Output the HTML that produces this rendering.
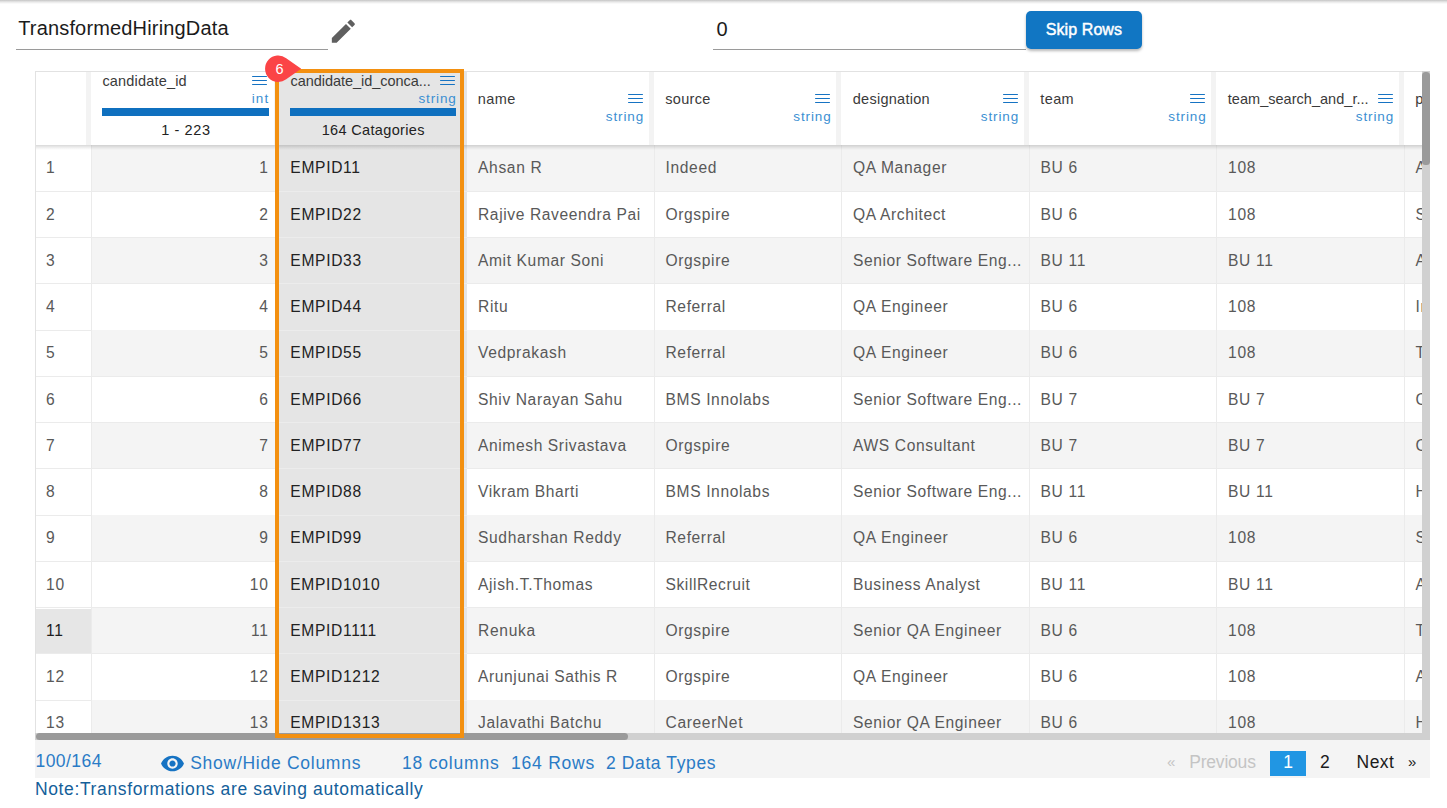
<!DOCTYPE html>
<html><head><meta charset="utf-8"><style>
html,body{margin:0;padding:0;}
body{width:1447px;height:808px;overflow:hidden;position:relative;background:#fff;font-family:"Liberation Sans",sans-serif;}
.t{position:absolute;white-space:nowrap;}
.r{position:absolute;box-sizing:content-box;}
</style></head><body>
<div class="r" style="left:0px;top:0px;width:1447px;height:4px;background:linear-gradient(#c4c4c4,#e6e6e6 45%,#ffffff);"></div>
<div class="t" style="left:18.20px;top:18.27px;font-size:20px;line-height:20px;color:#1b1b1b;letter-spacing:0.164px;">TransformedHiringData</div>
<div class="r" style="left:16px;top:49px;width:312px;height:1px;background:#9a9a9a;"></div>
<svg class="r" style="left:327.9px;top:16.1px;width:30.7px;height:30.7px" viewBox="0 0 24 24"><path fill="#5f5f5f" d="M3 17.25V21h3.75L17.81 9.94l-3.75-3.75L3 17.25zM20.71 7.04c.39-.39.39-1.02 0-1.41l-2.34-2.34c-.39-.39-1.02-.39-1.41 0l-1.83 1.83 3.75 3.75 1.83-1.83z"/></svg>
<div class="t" style="left:716.50px;top:18.97px;font-size:20px;line-height:20px;color:#1b1b1b;">0</div>
<div class="r" style="left:712.7px;top:49px;width:313.3px;height:1px;background:#9a9a9a;"></div>
<div class="r" style="left:1026px;top:11px;width:116px;height:38px;background:#1176c3;border-radius:5px;box-shadow:0 2px 3px rgba(0,0,0,.28);"></div>
<div class="t" style="left:1045.80px;top:21.66px;font-size:16px;line-height:16px;color:#ffffff;letter-spacing:0.078px;-webkit-text-stroke:0.45px #fff;">Skip Rows</div>
<div class="r" style="left:35px;top:71px;width:1395px;height:669px;background:#ffffff;"></div>
<div class="r" style="left:91.5px;top:145.0px;width:1338.5px;height:46.25px;background:#f4f4f4;"></div>
<div class="r" style="left:35px;top:190.75px;width:1395px;height:1px;background:#ebebeb;"></div>
<div class="r" style="left:35px;top:237.0px;width:1395px;height:1px;background:#ebebeb;"></div>
<div class="r" style="left:91.5px;top:237.5px;width:1338.5px;height:46.25px;background:#f4f4f4;"></div>
<div class="r" style="left:35px;top:283.25px;width:1395px;height:1px;background:#ebebeb;"></div>
<div class="r" style="left:35px;top:329.5px;width:1395px;height:1px;background:#ebebeb;"></div>
<div class="r" style="left:91.5px;top:330.0px;width:1338.5px;height:46.25px;background:#f4f4f4;"></div>
<div class="r" style="left:35px;top:375.75px;width:1395px;height:1px;background:#ebebeb;"></div>
<div class="r" style="left:35px;top:422.0px;width:1395px;height:1px;background:#ebebeb;"></div>
<div class="r" style="left:91.5px;top:422.5px;width:1338.5px;height:46.25px;background:#f4f4f4;"></div>
<div class="r" style="left:35px;top:468.25px;width:1395px;height:1px;background:#ebebeb;"></div>
<div class="r" style="left:35px;top:514.5px;width:1395px;height:1px;background:#ebebeb;"></div>
<div class="r" style="left:91.5px;top:515.0px;width:1338.5px;height:46.25px;background:#f4f4f4;"></div>
<div class="r" style="left:35px;top:560.75px;width:1395px;height:1px;background:#ebebeb;"></div>
<div class="r" style="left:35px;top:607.0px;width:1395px;height:1px;background:#ebebeb;"></div>
<div class="r" style="left:91.5px;top:607.5px;width:1338.5px;height:46.25px;background:#f4f4f4;"></div>
<div class="r" style="left:36px;top:608.5px;width:55px;height:45.25px;background:#e6e6e6;"></div>
<div class="r" style="left:35px;top:653.25px;width:1395px;height:1px;background:#ebebeb;"></div>
<div class="r" style="left:35px;top:699.5px;width:1395px;height:1px;background:#ebebeb;"></div>
<div class="r" style="left:91.5px;top:700.0px;width:1338.5px;height:46.25px;background:#f4f4f4;"></div>
<div class="r" style="left:35px;top:745.75px;width:1395px;height:1px;background:#ebebeb;"></div>
<div class="r" style="left:91px;top:145px;width:1px;height:595px;background:#ebebeb;"></div>
<div class="r" style="left:278.5px;top:145px;width:1px;height:595px;background:#ebebeb;"></div>
<div class="r" style="left:466.0px;top:145px;width:1px;height:595px;background:#ebebeb;"></div>
<div class="r" style="left:653.5px;top:145px;width:1px;height:595px;background:#ebebeb;"></div>
<div class="r" style="left:841.0px;top:145px;width:1px;height:595px;background:#ebebeb;"></div>
<div class="r" style="left:1028.5px;top:145px;width:1px;height:595px;background:#ebebeb;"></div>
<div class="r" style="left:1216.0px;top:145px;width:1px;height:595px;background:#ebebeb;"></div>
<div class="r" style="left:1403.5px;top:145px;width:1px;height:595px;background:#ebebeb;"></div>
<div class="r" style="left:279px;top:145px;width:187.5px;height:595px;background:#e5e5e5;"></div>
<div class="r" style="left:279px;top:190.75px;width:187.5px;height:1px;background:#ececec;"></div>
<div class="r" style="left:279px;top:237.0px;width:187.5px;height:1px;background:#ececec;"></div>
<div class="r" style="left:279px;top:283.25px;width:187.5px;height:1px;background:#ececec;"></div>
<div class="r" style="left:279px;top:329.5px;width:187.5px;height:1px;background:#ececec;"></div>
<div class="r" style="left:279px;top:375.75px;width:187.5px;height:1px;background:#ececec;"></div>
<div class="r" style="left:279px;top:422.0px;width:187.5px;height:1px;background:#ececec;"></div>
<div class="r" style="left:279px;top:468.25px;width:187.5px;height:1px;background:#ececec;"></div>
<div class="r" style="left:279px;top:514.5px;width:187.5px;height:1px;background:#ececec;"></div>
<div class="r" style="left:279px;top:560.75px;width:187.5px;height:1px;background:#ececec;"></div>
<div class="r" style="left:279px;top:607.0px;width:187.5px;height:1px;background:#ececec;"></div>
<div class="r" style="left:279px;top:653.25px;width:187.5px;height:1px;background:#ececec;"></div>
<div class="r" style="left:279px;top:699.5px;width:187.5px;height:1px;background:#ececec;"></div>
<div class="r" style="left:279px;top:745.75px;width:187.5px;height:1px;background:#ececec;"></div>
<div class="t" style="left:45.90px;top:160.29px;font-size:15.6px;line-height:15.6px;color:#595959;letter-spacing:0.222px;">1</div>
<div class="t" style="left:259.32px;top:160.29px;font-size:15.6px;line-height:15.6px;color:#595959;letter-spacing:0.222px;">1</div>
<div class="t" style="left:290.30px;top:160.29px;font-size:15.6px;line-height:15.6px;color:#222222;letter-spacing:0.680px;">EMPID11</div>
<div class="t" style="left:478.00px;top:160.29px;font-size:15.6px;line-height:15.6px;color:#595959;letter-spacing:0.656px;">Ahsan R</div>
<div class="t" style="left:665.50px;top:160.29px;font-size:15.6px;line-height:15.6px;color:#595959;letter-spacing:0.645px;">Indeed</div>
<div class="t" style="left:853.00px;top:160.29px;font-size:15.6px;line-height:15.6px;color:#595959;letter-spacing:0.650px;">QA Manager</div>
<div class="t" style="left:1040.50px;top:160.29px;font-size:15.6px;line-height:15.6px;color:#595959;letter-spacing:0.696px;">BU 6</div>
<div class="t" style="left:1228.00px;top:160.29px;font-size:15.6px;line-height:15.6px;color:#595959;letter-spacing:0.734px;">108</div>
<div class="t" style="left:1415.50px;top:160.29px;font-size:15.6px;line-height:15.6px;color:#595959;letter-spacing:0.267px;">A</div>
<div class="t" style="left:45.90px;top:206.54px;font-size:15.6px;line-height:15.6px;color:#595959;letter-spacing:0.222px;">2</div>
<div class="t" style="left:259.32px;top:206.54px;font-size:15.6px;line-height:15.6px;color:#595959;letter-spacing:0.222px;">2</div>
<div class="t" style="left:290.30px;top:206.54px;font-size:15.6px;line-height:15.6px;color:#222222;letter-spacing:0.685px;">EMPID22</div>
<div class="t" style="left:478.00px;top:206.54px;font-size:15.6px;line-height:15.6px;color:#595959;letter-spacing:0.604px;">Rajive Raveendra Pai</div>
<div class="t" style="left:665.50px;top:206.54px;font-size:15.6px;line-height:15.6px;color:#595959;letter-spacing:0.619px;">Orgspire</div>
<div class="t" style="left:853.00px;top:206.54px;font-size:15.6px;line-height:15.6px;color:#595959;letter-spacing:0.600px;">QA Architect</div>
<div class="t" style="left:1040.50px;top:206.54px;font-size:15.6px;line-height:15.6px;color:#595959;letter-spacing:0.696px;">BU 6</div>
<div class="t" style="left:1228.00px;top:206.54px;font-size:15.6px;line-height:15.6px;color:#595959;letter-spacing:0.734px;">108</div>
<div class="t" style="left:1415.50px;top:206.54px;font-size:15.6px;line-height:15.6px;color:#595959;letter-spacing:0.267px;">S</div>
<div class="t" style="left:45.90px;top:252.79px;font-size:15.6px;line-height:15.6px;color:#595959;letter-spacing:0.222px;">3</div>
<div class="t" style="left:259.32px;top:252.79px;font-size:15.6px;line-height:15.6px;color:#595959;letter-spacing:0.222px;">3</div>
<div class="t" style="left:290.30px;top:252.79px;font-size:15.6px;line-height:15.6px;color:#222222;letter-spacing:0.685px;">EMPID33</div>
<div class="t" style="left:478.00px;top:252.79px;font-size:15.6px;line-height:15.6px;color:#595959;letter-spacing:0.614px;">Amit Kumar Soni</div>
<div class="t" style="left:665.50px;top:252.79px;font-size:15.6px;line-height:15.6px;color:#595959;letter-spacing:0.619px;">Orgspire</div>
<div class="t" style="left:853.00px;top:252.79px;font-size:15.6px;line-height:15.6px;color:#595959;letter-spacing:0.591px;">Senior Software Eng...</div>
<div class="t" style="left:1040.50px;top:252.79px;font-size:15.6px;line-height:15.6px;color:#595959;letter-spacing:0.671px;">BU 11</div>
<div class="t" style="left:1228.00px;top:252.79px;font-size:15.6px;line-height:15.6px;color:#595959;letter-spacing:0.671px;">BU 11</div>
<div class="t" style="left:1415.50px;top:252.79px;font-size:15.6px;line-height:15.6px;color:#595959;letter-spacing:0.267px;">A</div>
<div class="t" style="left:45.90px;top:299.04px;font-size:15.6px;line-height:15.6px;color:#595959;letter-spacing:0.222px;">4</div>
<div class="t" style="left:259.32px;top:299.04px;font-size:15.6px;line-height:15.6px;color:#595959;letter-spacing:0.222px;">4</div>
<div class="t" style="left:290.30px;top:299.04px;font-size:15.6px;line-height:15.6px;color:#222222;letter-spacing:0.685px;">EMPID44</div>
<div class="t" style="left:478.00px;top:299.04px;font-size:15.6px;line-height:15.6px;color:#595959;letter-spacing:0.637px;">Ritu</div>
<div class="t" style="left:665.50px;top:299.04px;font-size:15.6px;line-height:15.6px;color:#595959;letter-spacing:0.603px;">Referral</div>
<div class="t" style="left:853.00px;top:299.04px;font-size:15.6px;line-height:15.6px;color:#595959;letter-spacing:0.627px;">QA Engineer</div>
<div class="t" style="left:1040.50px;top:299.04px;font-size:15.6px;line-height:15.6px;color:#595959;letter-spacing:0.696px;">BU 6</div>
<div class="t" style="left:1228.00px;top:299.04px;font-size:15.6px;line-height:15.6px;color:#595959;letter-spacing:0.734px;">108</div>
<div class="t" style="left:1415.50px;top:299.04px;font-size:15.6px;line-height:15.6px;color:#595959;letter-spacing:0.734px;">In</div>
<div class="t" style="left:45.90px;top:345.29px;font-size:15.6px;line-height:15.6px;color:#595959;letter-spacing:0.222px;">5</div>
<div class="t" style="left:259.32px;top:345.29px;font-size:15.6px;line-height:15.6px;color:#595959;letter-spacing:0.222px;">5</div>
<div class="t" style="left:290.30px;top:345.29px;font-size:15.6px;line-height:15.6px;color:#222222;letter-spacing:0.685px;">EMPID55</div>
<div class="t" style="left:478.00px;top:345.29px;font-size:15.6px;line-height:15.6px;color:#595959;letter-spacing:0.635px;">Vedprakash</div>
<div class="t" style="left:665.50px;top:345.29px;font-size:15.6px;line-height:15.6px;color:#595959;letter-spacing:0.603px;">Referral</div>
<div class="t" style="left:853.00px;top:345.29px;font-size:15.6px;line-height:15.6px;color:#595959;letter-spacing:0.627px;">QA Engineer</div>
<div class="t" style="left:1040.50px;top:345.29px;font-size:15.6px;line-height:15.6px;color:#595959;letter-spacing:0.696px;">BU 6</div>
<div class="t" style="left:1228.00px;top:345.29px;font-size:15.6px;line-height:15.6px;color:#595959;letter-spacing:0.734px;">108</div>
<div class="t" style="left:1415.50px;top:345.29px;font-size:15.6px;line-height:15.6px;color:#595959;letter-spacing:0.244px;">T</div>
<div class="t" style="left:45.90px;top:391.54px;font-size:15.6px;line-height:15.6px;color:#595959;letter-spacing:0.222px;">6</div>
<div class="t" style="left:259.32px;top:391.54px;font-size:15.6px;line-height:15.6px;color:#595959;letter-spacing:0.222px;">6</div>
<div class="t" style="left:290.30px;top:391.54px;font-size:15.6px;line-height:15.6px;color:#222222;letter-spacing:0.685px;">EMPID66</div>
<div class="t" style="left:478.00px;top:391.54px;font-size:15.6px;line-height:15.6px;color:#595959;letter-spacing:0.615px;">Shiv Narayan Sahu</div>
<div class="t" style="left:665.50px;top:391.54px;font-size:15.6px;line-height:15.6px;color:#595959;letter-spacing:0.626px;">BMS Innolabs</div>
<div class="t" style="left:853.00px;top:391.54px;font-size:15.6px;line-height:15.6px;color:#595959;letter-spacing:0.591px;">Senior Software Eng...</div>
<div class="t" style="left:1040.50px;top:391.54px;font-size:15.6px;line-height:15.6px;color:#595959;letter-spacing:0.696px;">BU 7</div>
<div class="t" style="left:1228.00px;top:391.54px;font-size:15.6px;line-height:15.6px;color:#595959;letter-spacing:0.696px;">BU 7</div>
<div class="t" style="left:1415.50px;top:391.54px;font-size:15.6px;line-height:15.6px;color:#595959;letter-spacing:0.289px;">C</div>
<div class="t" style="left:45.90px;top:437.79px;font-size:15.6px;line-height:15.6px;color:#595959;letter-spacing:0.222px;">7</div>
<div class="t" style="left:259.32px;top:437.79px;font-size:15.6px;line-height:15.6px;color:#595959;letter-spacing:0.222px;">7</div>
<div class="t" style="left:290.30px;top:437.79px;font-size:15.6px;line-height:15.6px;color:#222222;letter-spacing:0.685px;">EMPID77</div>
<div class="t" style="left:478.00px;top:437.79px;font-size:15.6px;line-height:15.6px;color:#595959;letter-spacing:0.608px;">Animesh Srivastava</div>
<div class="t" style="left:665.50px;top:437.79px;font-size:15.6px;line-height:15.6px;color:#595959;letter-spacing:0.619px;">Orgspire</div>
<div class="t" style="left:853.00px;top:437.79px;font-size:15.6px;line-height:15.6px;color:#595959;letter-spacing:0.625px;">AWS Consultant</div>
<div class="t" style="left:1040.50px;top:437.79px;font-size:15.6px;line-height:15.6px;color:#595959;letter-spacing:0.696px;">BU 7</div>
<div class="t" style="left:1228.00px;top:437.79px;font-size:15.6px;line-height:15.6px;color:#595959;letter-spacing:0.696px;">BU 7</div>
<div class="t" style="left:1415.50px;top:437.79px;font-size:15.6px;line-height:15.6px;color:#595959;letter-spacing:0.289px;">C</div>
<div class="t" style="left:45.90px;top:484.04px;font-size:15.6px;line-height:15.6px;color:#595959;letter-spacing:0.222px;">8</div>
<div class="t" style="left:259.32px;top:484.04px;font-size:15.6px;line-height:15.6px;color:#595959;letter-spacing:0.222px;">8</div>
<div class="t" style="left:290.30px;top:484.04px;font-size:15.6px;line-height:15.6px;color:#222222;letter-spacing:0.685px;">EMPID88</div>
<div class="t" style="left:478.00px;top:484.04px;font-size:15.6px;line-height:15.6px;color:#595959;letter-spacing:0.599px;">Vikram Bharti</div>
<div class="t" style="left:665.50px;top:484.04px;font-size:15.6px;line-height:15.6px;color:#595959;letter-spacing:0.626px;">BMS Innolabs</div>
<div class="t" style="left:853.00px;top:484.04px;font-size:15.6px;line-height:15.6px;color:#595959;letter-spacing:0.591px;">Senior Software Eng...</div>
<div class="t" style="left:1040.50px;top:484.04px;font-size:15.6px;line-height:15.6px;color:#595959;letter-spacing:0.671px;">BU 11</div>
<div class="t" style="left:1228.00px;top:484.04px;font-size:15.6px;line-height:15.6px;color:#595959;letter-spacing:0.671px;">BU 11</div>
<div class="t" style="left:1415.50px;top:484.04px;font-size:15.6px;line-height:15.6px;color:#595959;letter-spacing:0.289px;">H</div>
<div class="t" style="left:45.90px;top:530.29px;font-size:15.6px;line-height:15.6px;color:#595959;letter-spacing:0.222px;">9</div>
<div class="t" style="left:259.32px;top:530.29px;font-size:15.6px;line-height:15.6px;color:#595959;letter-spacing:0.222px;">9</div>
<div class="t" style="left:290.30px;top:530.29px;font-size:15.6px;line-height:15.6px;color:#222222;letter-spacing:0.685px;">EMPID99</div>
<div class="t" style="left:478.00px;top:530.29px;font-size:15.6px;line-height:15.6px;color:#595959;letter-spacing:0.628px;">Sudharshan Reddy</div>
<div class="t" style="left:665.50px;top:530.29px;font-size:15.6px;line-height:15.6px;color:#595959;letter-spacing:0.603px;">Referral</div>
<div class="t" style="left:853.00px;top:530.29px;font-size:15.6px;line-height:15.6px;color:#595959;letter-spacing:0.627px;">QA Engineer</div>
<div class="t" style="left:1040.50px;top:530.29px;font-size:15.6px;line-height:15.6px;color:#595959;letter-spacing:0.696px;">BU 6</div>
<div class="t" style="left:1228.00px;top:530.29px;font-size:15.6px;line-height:15.6px;color:#595959;letter-spacing:0.734px;">108</div>
<div class="t" style="left:1415.50px;top:530.29px;font-size:15.6px;line-height:15.6px;color:#595959;letter-spacing:0.267px;">S</div>
<div class="t" style="left:45.90px;top:576.54px;font-size:15.6px;line-height:15.6px;color:#595959;letter-spacing:0.845px;">10</div>
<div class="t" style="left:249.80px;top:576.54px;font-size:15.6px;line-height:15.6px;color:#595959;letter-spacing:0.845px;">10</div>
<div class="t" style="left:290.30px;top:576.54px;font-size:15.6px;line-height:15.6px;color:#222222;letter-spacing:0.670px;">EMPID1010</div>
<div class="t" style="left:478.00px;top:576.54px;font-size:15.6px;line-height:15.6px;color:#595959;letter-spacing:0.610px;">Ajish.T.Thomas</div>
<div class="t" style="left:665.50px;top:576.54px;font-size:15.6px;line-height:15.6px;color:#595959;letter-spacing:0.582px;">SkillRecruit</div>
<div class="t" style="left:853.00px;top:576.54px;font-size:15.6px;line-height:15.6px;color:#595959;letter-spacing:0.602px;">Business Analyst</div>
<div class="t" style="left:1040.50px;top:576.54px;font-size:15.6px;line-height:15.6px;color:#595959;letter-spacing:0.671px;">BU 11</div>
<div class="t" style="left:1228.00px;top:576.54px;font-size:15.6px;line-height:15.6px;color:#595959;letter-spacing:0.671px;">BU 11</div>
<div class="t" style="left:1415.50px;top:576.54px;font-size:15.6px;line-height:15.6px;color:#595959;letter-spacing:0.267px;">A</div>
<div class="t" style="left:45.90px;top:622.79px;font-size:15.6px;line-height:15.6px;color:#1e1e1e;letter-spacing:0.815px;">11</div>
<div class="t" style="left:250.99px;top:622.79px;font-size:15.6px;line-height:15.6px;color:#595959;letter-spacing:0.815px;">11</div>
<div class="t" style="left:290.30px;top:622.79px;font-size:15.6px;line-height:15.6px;color:#222222;letter-spacing:0.658px;">EMPID1111</div>
<div class="t" style="left:478.00px;top:622.79px;font-size:15.6px;line-height:15.6px;color:#595959;letter-spacing:0.676px;">Renuka</div>
<div class="t" style="left:665.50px;top:622.79px;font-size:15.6px;line-height:15.6px;color:#595959;letter-spacing:0.619px;">Orgspire</div>
<div class="t" style="left:853.00px;top:622.79px;font-size:15.6px;line-height:15.6px;color:#595959;letter-spacing:0.608px;">Senior QA Engineer</div>
<div class="t" style="left:1040.50px;top:622.79px;font-size:15.6px;line-height:15.6px;color:#595959;letter-spacing:0.696px;">BU 6</div>
<div class="t" style="left:1228.00px;top:622.79px;font-size:15.6px;line-height:15.6px;color:#595959;letter-spacing:0.734px;">108</div>
<div class="t" style="left:1415.50px;top:622.79px;font-size:15.6px;line-height:15.6px;color:#595959;letter-spacing:0.244px;">T</div>
<div class="t" style="left:45.90px;top:669.04px;font-size:15.6px;line-height:15.6px;color:#595959;letter-spacing:0.845px;">12</div>
<div class="t" style="left:249.80px;top:669.04px;font-size:15.6px;line-height:15.6px;color:#595959;letter-spacing:0.845px;">12</div>
<div class="t" style="left:290.30px;top:669.04px;font-size:15.6px;line-height:15.6px;color:#222222;letter-spacing:0.670px;">EMPID1212</div>
<div class="t" style="left:478.00px;top:669.04px;font-size:15.6px;line-height:15.6px;color:#595959;letter-spacing:0.595px;">Arunjunai Sathis R</div>
<div class="t" style="left:665.50px;top:669.04px;font-size:15.6px;line-height:15.6px;color:#595959;letter-spacing:0.619px;">Orgspire</div>
<div class="t" style="left:853.00px;top:669.04px;font-size:15.6px;line-height:15.6px;color:#595959;letter-spacing:0.627px;">QA Engineer</div>
<div class="t" style="left:1040.50px;top:669.04px;font-size:15.6px;line-height:15.6px;color:#595959;letter-spacing:0.696px;">BU 6</div>
<div class="t" style="left:1228.00px;top:669.04px;font-size:15.6px;line-height:15.6px;color:#595959;letter-spacing:0.734px;">108</div>
<div class="t" style="left:1415.50px;top:669.04px;font-size:15.6px;line-height:15.6px;color:#595959;letter-spacing:0.267px;">A</div>
<div class="t" style="left:45.90px;top:715.29px;font-size:15.6px;line-height:15.6px;color:#595959;letter-spacing:0.845px;">13</div>
<div class="t" style="left:249.80px;top:715.29px;font-size:15.6px;line-height:15.6px;color:#595959;letter-spacing:0.845px;">13</div>
<div class="t" style="left:290.30px;top:715.29px;font-size:15.6px;line-height:15.6px;color:#222222;letter-spacing:0.670px;">EMPID1313</div>
<div class="t" style="left:478.00px;top:715.29px;font-size:15.6px;line-height:15.6px;color:#595959;letter-spacing:0.596px;">Jalavathi Batchu</div>
<div class="t" style="left:665.50px;top:715.29px;font-size:15.6px;line-height:15.6px;color:#595959;letter-spacing:0.631px;">CareerNet</div>
<div class="t" style="left:853.00px;top:715.29px;font-size:15.6px;line-height:15.6px;color:#595959;letter-spacing:0.608px;">Senior QA Engineer</div>
<div class="t" style="left:1040.50px;top:715.29px;font-size:15.6px;line-height:15.6px;color:#595959;letter-spacing:0.696px;">BU 6</div>
<div class="t" style="left:1228.00px;top:715.29px;font-size:15.6px;line-height:15.6px;color:#595959;letter-spacing:0.734px;">108</div>
<div class="t" style="left:1415.50px;top:715.29px;font-size:15.6px;line-height:15.6px;color:#595959;letter-spacing:0.289px;">H</div>
<div class="r" style="left:35px;top:71px;width:1395px;height:74px;background:#ffffff;"></div>
<div class="r" style="left:35px;top:145px;width:1395px;height:5px;background:linear-gradient(rgba(0,0,0,.15),rgba(0,0,0,.05) 60%,rgba(0,0,0,0));"></div>
<div class="r" style="left:86.3px;top:72px;width:5.2px;height:73px;background:#f3f3f3;"></div>
<div class="r" style="left:273.7px;top:72px;width:5.3px;height:73px;background:#f3f3f3;"></div>
<div class="r" style="left:461.2px;top:72px;width:5.3px;height:73px;background:#f3f3f3;"></div>
<div class="r" style="left:648.7px;top:72px;width:5.3px;height:73px;background:#f3f3f3;"></div>
<div class="r" style="left:836.2px;top:72px;width:5.3px;height:73px;background:#f3f3f3;"></div>
<div class="r" style="left:1023.7px;top:72px;width:5.3px;height:73px;background:#f3f3f3;"></div>
<div class="r" style="left:1211.2px;top:72px;width:5.3px;height:73px;background:#f3f3f3;"></div>
<div class="r" style="left:1398.7px;top:72px;width:5.3px;height:73px;background:#f3f3f3;"></div>
<div class="r" style="left:279px;top:71px;width:187.5px;height:74px;background:#e5e5e5;"></div>
<div class="t" style="left:102.40px;top:73.73px;font-size:14.5px;line-height:14.5px;color:#3a3a3a;letter-spacing:0.187px;">candidate_id</div>
<div class="r" style="left:252px;top:75.8px;width:15px;height:1.3px;background:#1673c3;border-radius:0.7px;"></div>
<div class="r" style="left:252px;top:79.85px;width:15px;height:1.3px;background:#1673c3;border-radius:0.7px;"></div>
<div class="r" style="left:252px;top:83.9px;width:15px;height:1.3px;background:#1673c3;border-radius:0.7px;"></div>
<div class="t" style="left:251.70px;top:91.87px;font-size:13.5px;line-height:13.5px;color:#3b8fd2;letter-spacing:1.171px;">int</div>
<div class="r" style="left:102px;top:108px;width:167px;height:8px;background:#0f70bf;"></div>
<div class="t" style="left:161.20px;top:123.33px;font-size:14.5px;line-height:14.5px;color:#222222;letter-spacing:0.609px;">1 - 223</div>
<div class="t" style="left:290.60px;top:73.73px;font-size:14.5px;line-height:14.5px;color:#3a3a3a;letter-spacing:-0.049px;">candidate_id_conca...</div>
<div class="r" style="left:440px;top:75.8px;width:15px;height:1.3px;background:#1673c3;border-radius:0.7px;"></div>
<div class="r" style="left:440px;top:79.85px;width:15px;height:1.3px;background:#1673c3;border-radius:0.7px;"></div>
<div class="r" style="left:440px;top:83.9px;width:15px;height:1.3px;background:#1673c3;border-radius:0.7px;"></div>
<div class="t" style="left:418.40px;top:91.87px;font-size:13.5px;line-height:13.5px;color:#3b8fd2;letter-spacing:0.877px;">string</div>
<div class="r" style="left:290px;top:108px;width:166px;height:8px;background:#0f70bf;"></div>
<div class="t" style="left:321.70px;top:123.33px;font-size:14.5px;line-height:14.5px;color:#222222;letter-spacing:0.343px;">164 Catagories</div>
<div class="t" style="left:477.80px;top:91.83px;font-size:14.5px;line-height:14.5px;color:#3a3a3a;letter-spacing:0.423px;">name</div>
<div class="r" style="left:627.5px;top:93.8px;width:15px;height:1.3px;background:#1673c3;border-radius:0.7px;"></div>
<div class="r" style="left:627.5px;top:97.85px;width:15px;height:1.3px;background:#1673c3;border-radius:0.7px;"></div>
<div class="r" style="left:627.5px;top:101.9px;width:15px;height:1.3px;background:#1673c3;border-radius:0.7px;"></div>
<div class="t" style="left:605.80px;top:109.77px;font-size:13.5px;line-height:13.5px;color:#3b8fd2;letter-spacing:0.877px;">string</div>
<div class="t" style="left:665.30px;top:91.83px;font-size:14.5px;line-height:14.5px;color:#3a3a3a;letter-spacing:0.305px;">source</div>
<div class="r" style="left:815.0px;top:93.8px;width:15px;height:1.3px;background:#1673c3;border-radius:0.7px;"></div>
<div class="r" style="left:815.0px;top:97.85px;width:15px;height:1.3px;background:#1673c3;border-radius:0.7px;"></div>
<div class="r" style="left:815.0px;top:101.9px;width:15px;height:1.3px;background:#1673c3;border-radius:0.7px;"></div>
<div class="t" style="left:793.30px;top:109.77px;font-size:13.5px;line-height:13.5px;color:#3b8fd2;letter-spacing:0.877px;">string</div>
<div class="t" style="left:852.80px;top:91.83px;font-size:14.5px;line-height:14.5px;color:#3a3a3a;letter-spacing:0.260px;">designation</div>
<div class="r" style="left:1002.5px;top:93.8px;width:15px;height:1.3px;background:#1673c3;border-radius:0.7px;"></div>
<div class="r" style="left:1002.5px;top:97.85px;width:15px;height:1.3px;background:#1673c3;border-radius:0.7px;"></div>
<div class="r" style="left:1002.5px;top:101.9px;width:15px;height:1.3px;background:#1673c3;border-radius:0.7px;"></div>
<div class="t" style="left:980.80px;top:109.77px;font-size:13.5px;line-height:13.5px;color:#3b8fd2;letter-spacing:0.877px;">string</div>
<div class="t" style="left:1040.30px;top:91.83px;font-size:14.5px;line-height:14.5px;color:#3a3a3a;letter-spacing:0.376px;">team</div>
<div class="r" style="left:1190.0px;top:93.8px;width:15px;height:1.3px;background:#1673c3;border-radius:0.7px;"></div>
<div class="r" style="left:1190.0px;top:97.85px;width:15px;height:1.3px;background:#1673c3;border-radius:0.7px;"></div>
<div class="r" style="left:1190.0px;top:101.9px;width:15px;height:1.3px;background:#1673c3;border-radius:0.7px;"></div>
<div class="t" style="left:1168.30px;top:109.77px;font-size:13.5px;line-height:13.5px;color:#3b8fd2;letter-spacing:0.877px;">string</div>
<div class="t" style="left:1227.80px;top:91.83px;font-size:14.5px;line-height:14.5px;color:#3a3a3a;letter-spacing:0.028px;">team_search_and_r...</div>
<div class="r" style="left:1377.5px;top:93.8px;width:15px;height:1.3px;background:#1673c3;border-radius:0.7px;"></div>
<div class="r" style="left:1377.5px;top:97.85px;width:15px;height:1.3px;background:#1673c3;border-radius:0.7px;"></div>
<div class="r" style="left:1377.5px;top:101.9px;width:15px;height:1.3px;background:#1673c3;border-radius:0.7px;"></div>
<div class="t" style="left:1355.80px;top:109.77px;font-size:13.5px;line-height:13.5px;color:#3b8fd2;letter-spacing:0.877px;">string</div>
<div class="t" style="left:1415.30px;top:91.83px;font-size:14.5px;line-height:14.5px;color:#3a3a3a;letter-spacing:0.282px;">p</div>
<div class="r" style="left:35px;top:71px;width:1395px;height:1px;background:#e2e2e2;"></div>
<div class="r" style="left:35px;top:71px;width:1px;height:669px;background:#e2e2e2;"></div>
<div class="r" style="left:35px;top:733px;width:1395px;height:7px;background:#d0d0d0;"></div>
<div class="r" style="left:36px;top:733px;width:592px;height:7px;background:#9a9a9a;border-radius:3.5px;"></div>
<div class="r" style="left:1422px;top:71px;width:8px;height:669px;background:#d0d0d0;"></div>
<div class="r" style="left:1422px;top:72px;width:7.5px;height:92.7px;background:#9a9a9a;border-radius:3.5px;"></div>
<div class="r" style="left:275.2px;top:69.2px;width:180.5px;height:660.8px;border:4px solid #f39010;"></div>
<svg class="r" style="left:262px;top:52px;width:44px;height:34px" viewBox="262 52 44 34"><path fill="#fb4446" d="M 286.2 58.2 L 301.2 68.7 L 286.2 79.3 A 13.2 13.2 0 1 1 286.2 58.2 Z"/></svg>
<div class="t" style="left:275.57px;top:61.53px;font-size:14.5px;line-height:14.5px;color:#ffffff;">6</div>
<div class="r" style="left:35px;top:740px;width:1395px;height:38px;background:#f4f4f4;"></div>
<div class="t" style="left:35.50px;top:753.19px;font-size:17.5px;line-height:17.5px;color:#2a7bc6;letter-spacing:0.440px;">100/164</div>
<svg class="r" style="left:160.2px;top:750.8px;width:25px;height:25px" viewBox="0 0 24 24"><path fill="#1673c3" d="M12 4.5C7 4.5 2.73 7.61 1 12c1.73 4.39 6 7.5 11 7.5s9.27-3.11 11-7.5c-1.73-4.39-6-7.5-11-7.5zM12 17c-2.76 0-5-2.24-5-5s2.24-5 5-5 5 2.24 5 5-2.24 5-5 5zm0-8c-1.66 0-3 1.34-3 3s1.34 3 3 3 3-1.34 3-3-1.34-3-3-3z"/></svg>
<div class="t" style="left:190.20px;top:755.19px;font-size:17.5px;line-height:17.5px;color:#2a7bc6;letter-spacing:0.728px;">Show/Hide Columns</div>
<div class="t" style="left:402.00px;top:755.19px;font-size:17.5px;line-height:17.5px;color:#2a7bc6;letter-spacing:0.812px;">18 columns</div>
<div class="t" style="left:511.00px;top:755.19px;font-size:17.5px;line-height:17.5px;color:#2a7bc6;letter-spacing:0.769px;">164 Rows</div>
<div class="t" style="left:606.00px;top:755.19px;font-size:17.5px;line-height:17.5px;color:#2a7bc6;letter-spacing:0.609px;">2 Data Types</div>
<div class="t" style="left:1167.00px;top:754.30px;font-size:15px;line-height:15px;color:#c4c4c4;letter-spacing:-1.043px;">«</div>
<div class="t" style="left:1189.20px;top:753.69px;font-size:17.5px;line-height:17.5px;color:#c4c4c4;letter-spacing:-0.198px;">Previous</div>
<div class="r" style="left:1270px;top:751px;width:35.8px;height:25px;background:#2196e3;"></div>
<div class="t" style="left:1283.13px;top:753.69px;font-size:17.5px;line-height:17.5px;color:#ffffff;">1</div>
<div class="t" style="left:1320.00px;top:753.69px;font-size:17.5px;line-height:17.5px;color:#1b1b1b;letter-spacing:-0.233px;">2</div>
<div class="t" style="left:1356.60px;top:753.69px;font-size:17.5px;line-height:17.5px;color:#1b1b1b;letter-spacing:0.406px;">Next</div>
<div class="t" style="left:1408.00px;top:754.30px;font-size:15px;line-height:15px;color:#1b1b1b;letter-spacing:-1.043px;">»</div>
<div class="t" style="left:35.00px;top:781.19px;font-size:17.5px;line-height:17.5px;color:#14609a;letter-spacing:0.625px;">Note:Transformations are saving automatically</div>
</body></html>
